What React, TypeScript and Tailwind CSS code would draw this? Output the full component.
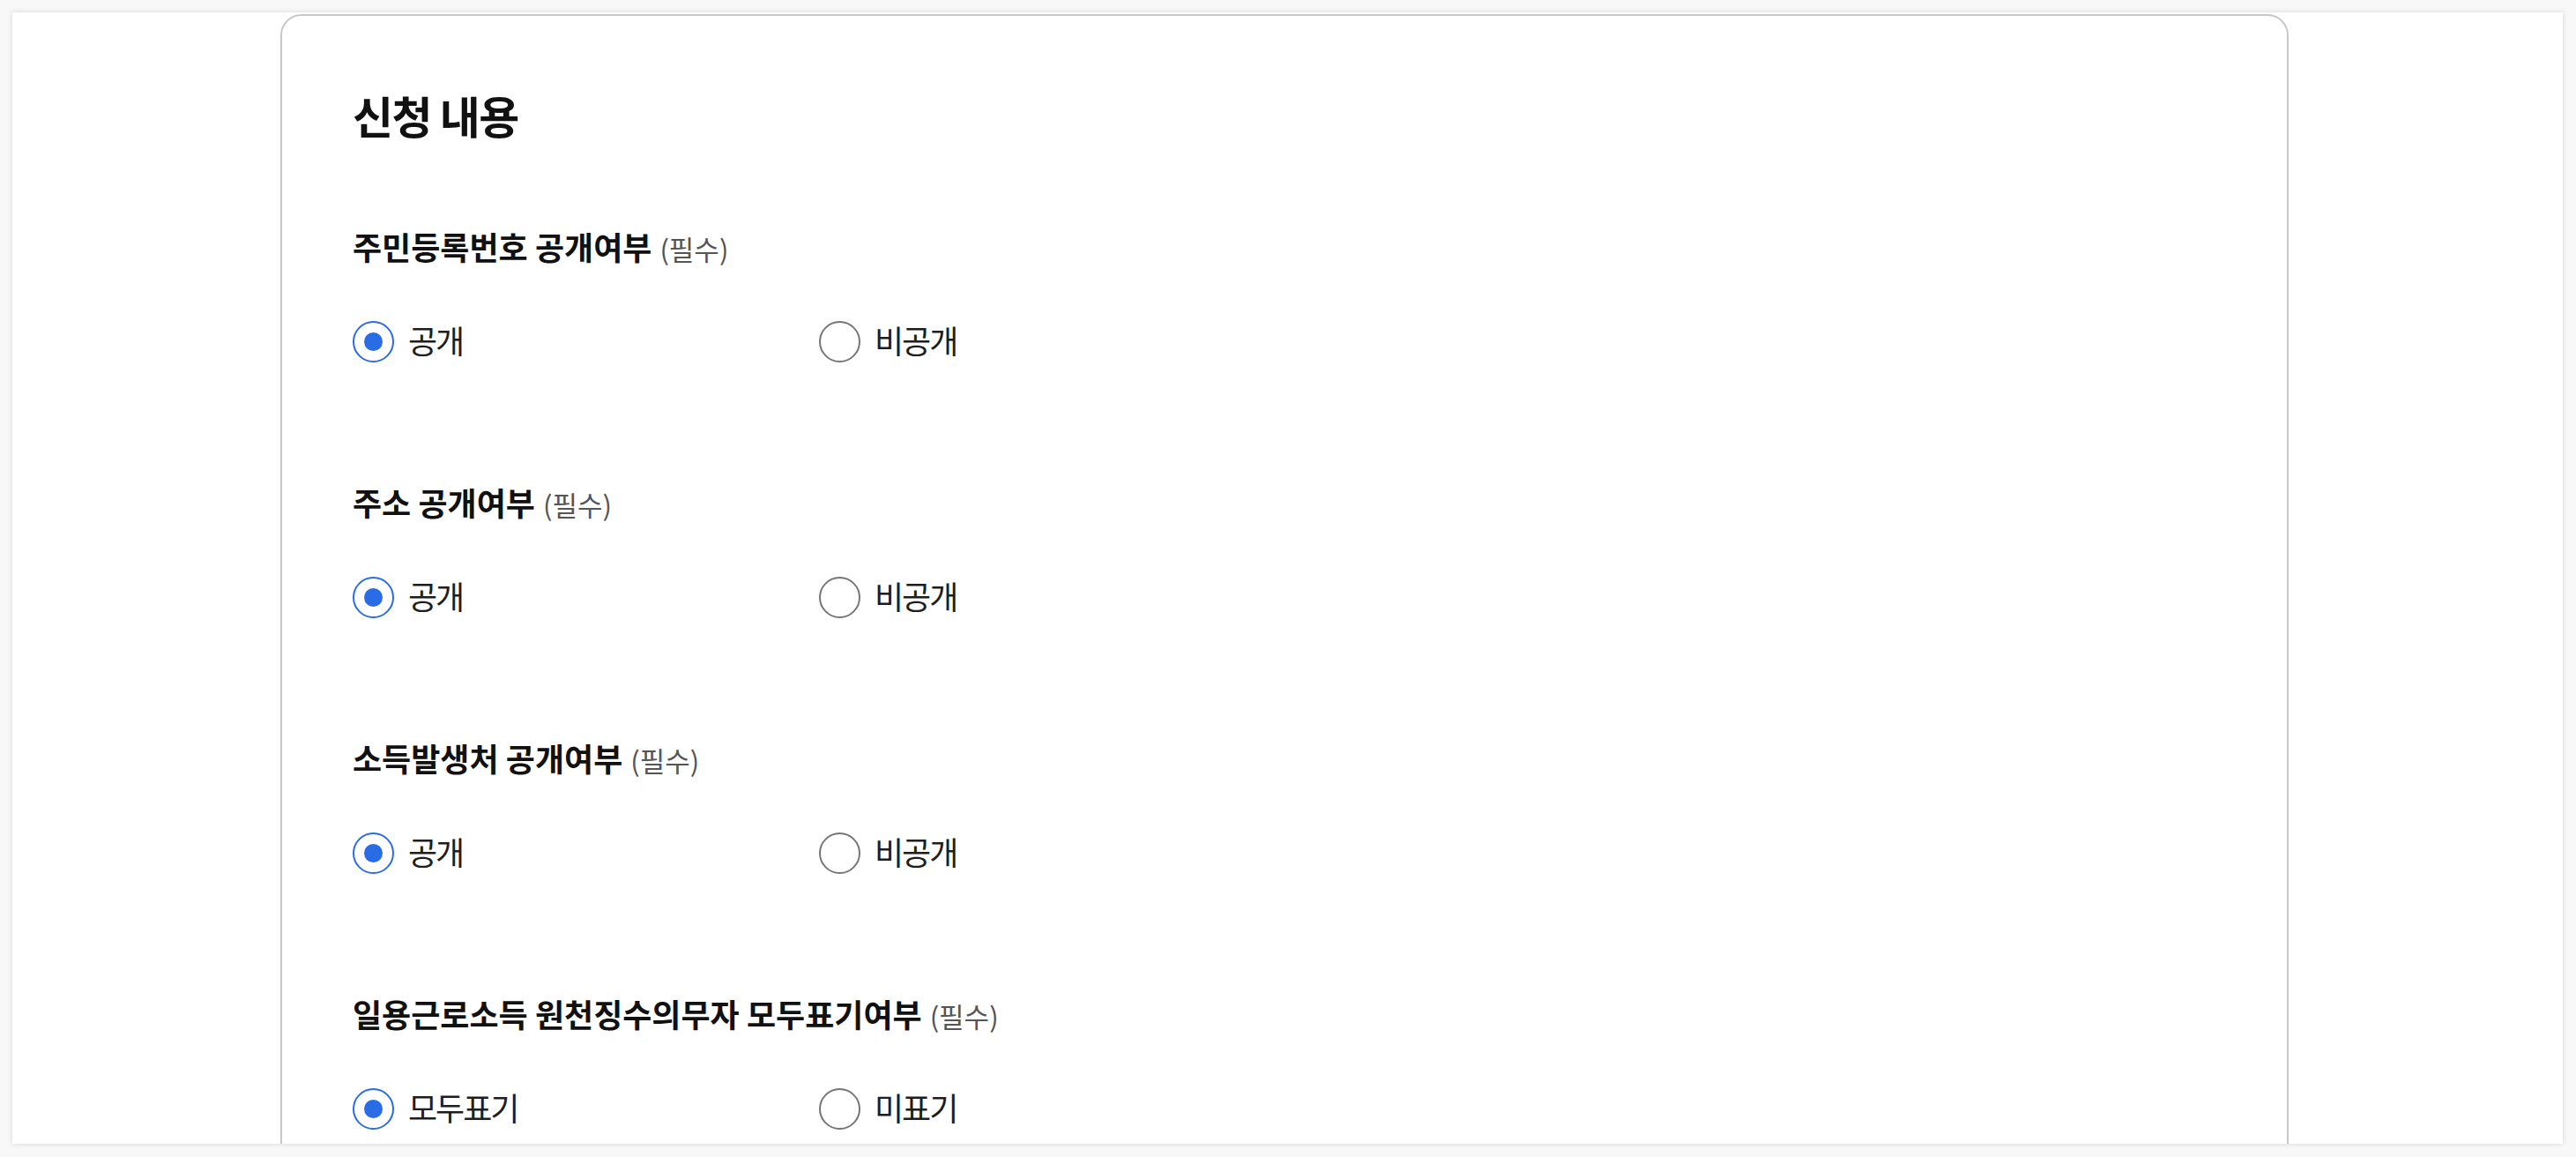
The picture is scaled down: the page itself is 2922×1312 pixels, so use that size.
const font = { fontFamily: '"Noto Sans CJK KR", "Noto Sans", sans-serif' };

type Option = { label: string; checked: boolean };

const sections: { title: string; options: Option[] }[] = [
  { title: "주민등록번호 공개여부", options: [{ label: "공개", checked: true }, { label: "비공개", checked: false }] },
  { title: "주소 공개여부", options: [{ label: "공개", checked: true }, { label: "비공개", checked: false }] },
  { title: "소득발생처 공개여부", options: [{ label: "공개", checked: true }, { label: "비공개", checked: false }] },
  { title: "일용근로소득 원천징수의무자 모두표기여부", options: [{ label: "모두표기", checked: true }, { label: "미표기", checked: false }] },
];

const Radio = ({ label, checked }: Option) => {
  return (
    <label className="flex items-center gap-[16px] w-[529px] h-[48px] cursor-pointer">
      <span
        className={
          checked
            ? "flex items-center justify-center w-[47px] h-[47px] rounded-full border-2 border-[#2a6be6] bg-white"
            : "flex items-center justify-center w-[47px] h-[47px] rounded-full border-2 border-[#767676] bg-white"
        }
      >
        {checked && <span className="w-[21px] h-[21px] rounded-full bg-[#2a6be6]" />}
      </span>
      <span className="text-[36px] leading-[48px] tracking-[-2px] text-[#1e1e1e] -mt-[4px]">{label}</span>
    </label>
  );
};

const App = () => {
  return (
    <div id="page" className="w-full h-[1312px] bg-[#f8f8f8] p-[14px] pr-[15px]" style={font}>
      <div id="panel" className="h-[1283px] bg-white overflow-hidden shadow-[0_0_6px_rgba(0,0,0,0.14)] pt-[2px]">
        <div
          id="card"
          className="
            ml-[304px] w-[2278px] border-2 border-[#c8c8c8] rounded-[24px] bg-white
            pl-[80px] pt-[88px] pb-[200px]"
        >
          <h2 className="text-[50px] leading-[60px] font-bold tracking-[-1.5px] text-[#111] -mt-[6px]">신청 내용</h2>

          <div className="flex flex-col gap-[140px] mt-[101px]">
            {sections.map((s) => (
              <div key={s.title} className="flex flex-col gap-[58px]">
                <div className="h-[44px] leading-[44px] -mt-[4px] mb-[4px] whitespace-nowrap">
                  <span className="text-[36px] font-bold text-[#111]">{s.title}</span>
                  <span className="text-[31px] text-[#555] ml-[9px]">(필수)</span>
                </div>
                <div className="flex">
                  {s.options.map((o) => (
                    <Radio key={o.label} {...o} />
                  ))}
                </div>
              </div>
            ))}
          </div>
        </div>
      </div>
    </div>
  );
};

export default App;
